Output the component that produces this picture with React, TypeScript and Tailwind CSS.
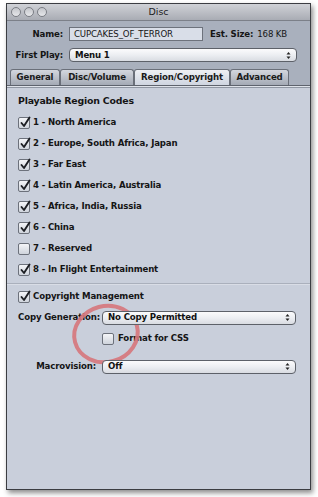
import React from "react"

const regions = [
  { label: "1 - North America", on: true },
  { label: "2 - Europe, South Africa, Japan", on: true },
  { label: "3 - Far East", on: true },
  { label: "4 - Latin America, Australia", on: true },
  { label: "5 - Africa, India, Russia", on: true },
  { label: "6 - China", on: true },
  { label: "7 - Reserved", on: false },
  { label: "8 - In Flight Entertainment", on: true },
]

function Check({ on }: { on: boolean }) {
  return (
    <span className="relative w-[12px] h-[12px] shrink-0 rounded-[2px] border border-[#6c717b] bg-gradient-to-b from-[#f4f5f8] to-[#cfd4dc]">
      {on && (
        <svg className="absolute left-[0px] top-[-2px]" width="13" height="13" viewBox="0 0 13 13">
          <path d="M2.5 7 L5 10 L10.5 1.5" stroke="#1d1f24" strokeWidth="1.9" fill="none" strokeLinecap="round" strokeLinejoin="round" />
        </svg>
      )}
    </span>
  )
}

function Popup({ value, className }: { value: string; className?: string }) {
  return (
    <div
      className={
        "relative z-10 h-[14px] flex items-center justify-between rounded-[4px] border border-[#5d6169] bg-gradient-to-b from-[#fbfbfc] via-[#eceef2] to-[#d9dce2] pl-[5px] pr-[5px] " +
        (className ?? "")
      }
    >
      <span className="font-bold text-[8.6px] tracking-[-0.15px] text-[#111] whitespace-nowrap">{value}</span>
      <svg width="5" height="9" viewBox="0 0 5 9">
        <path d="M0.5 3.5 L2.5 1 L4.5 3.5 Z" fill="#222" />
        <path d="M0.5 5.5 L2.5 8 L4.5 5.5 Z" fill="#222" />
      </svg>
    </div>
  )
}

function Tab({ label, w, active }: { label: string; w: string; active?: boolean }) {
  return (
    <div
      className={
        "h-[16px] flex items-center justify-center rounded-t-[3px] border border-b-0 border-[#6a6f79] text-[8.6px] tracking-[-0.15px] font-bold text-[#1a1a1a] whitespace-nowrap " +
        w +
        (active
          ? " bg-gradient-to-b from-[#eef0f4] to-[#cfd5e0]"
          : " bg-gradient-to-b from-[#d4d7de] to-[#a4aab5]")
      }
    >
      {label}
    </div>
  )
}

const txt = "text-[8.6px] tracking-[-0.15px] whitespace-nowrap"

export default function App() {
  return (
    <div className="w-[318px] h-[497px] bg-white font-['DejaVu_Sans',sans-serif] text-[#151515] overflow-hidden">
      <div className="relative ml-[6px] mt-[3px] w-[305px] h-[487px] border border-[#3b3d42] shadow-[2px_3px_5px_rgba(0,0,0,0.45)] flex flex-col">
        {/* title bar */}
        <div className="relative h-[17px] shrink-0 bg-gradient-to-b from-[#d0d2d7] to-[#a9acb4] border-b border-[#7c8089] flex items-center justify-center">
          <div className="absolute left-[4px] top-[3px] flex gap-[3px]">
            {[0, 1, 2].map((i) => (
              <span key={i} className="w-[10px] h-[10px] rounded-full border border-[#7b7e85] bg-gradient-to-b from-[#c4c6cb] to-[#e6e7ea]" />
            ))}
          </div>
          <span className="text-[9.5px] text-[#222]">Disc</span>
        </div>

        {/* top fields */}
        <div className="bg-[#a9b0bd] pt-[6px] shrink-0">
          <div className="flex items-center h-[14px]">
            <span className={"w-[56px] text-right font-bold " + txt}>Name:</span>
            <div className={"ml-[6px] w-[134px] h-[14px] border border-[#6d727c] bg-[#d9dee8] flex items-center pl-[4px] " + txt}>
              CUPCAKES_OF_TERROR
            </div>
            <span className={"ml-[7px] font-bold " + txt}>Est. Size:</span>
            <span className={"ml-[4px] " + txt}>168 KB</span>
          </div>
          <div className="flex items-center h-[14px] mt-[7px]">
            <span className={"w-[56px] text-right font-bold " + txt}>First Play:</span>
            <Popup value="Menu 1" className="ml-[6px] w-[228px]" />
          </div>
          <div className="flex items-end mt-[7px] pl-[3px]">
            <Tab label="General" w="w-[50px]" />
            <Tab label="Disc/Volume" w="w-[74px]" />
            <Tab label="Region/Copyright" w="w-[96px]" active />
            <Tab label="Advanced" w="w-[59px]" />
          </div>
        </div>

        {/* panel */}
        <div className="relative flex-1 bg-[#c9cfdb]">
          <div className="h-[1px] bg-[#5e636d]" />
          <div className="h-[1px] bg-[#dfe3ea]" />
          <div className="h-[1px] bg-[#9097a3]" />

          <div className="pl-[11px] pt-[2px]">
            <div className="h-[22px] flex items-center font-bold text-[9.4px] tracking-[-0.2px] whitespace-nowrap">Playable Region Codes</div>
            {regions.map((r) => (
              <div key={r.label} className={"h-[21px] flex items-center gap-[3px] font-bold " + txt}>
                <Check on={r.on} />
                <span>{r.label}</span>
              </div>
            ))}
          </div>
          <div className="mt-[3px] h-[1px] bg-[#aab0bc]" />
          <div className="h-[1px] bg-[#d9dde6]" />
          <div className="pl-[11px] pt-[1px]">
            <div className={"h-[21px] flex items-center gap-[3px] font-bold " + txt}>
              <Check on />
              <span>Copyright Management</span>
            </div>
            <div className="h-[21px] flex items-center">
              <span className={"w-[78px] text-right font-bold " + txt}>Copy Generation:</span>
              <Popup value="No Copy Permitted" className="ml-[6px] w-[194px]" />
            </div>
            <div className={"h-[21px] flex items-center gap-[4px] pl-[84px] font-bold " + txt}>
              <Check on={false} />
              <span>Format for CSS</span>
            </div>
            <div className="h-[21px] flex items-center mt-[7px]">
              <span className={"w-[78px] text-right font-bold " + txt}>Macrovision:</span>
              <Popup value="Off" className="ml-[6px] w-[194px]" />
            </div>
          </div>
        </div>

        {/* hand drawn annotation circle */}
        <svg className="absolute left-[60px] top-[292px] pointer-events-none" width="90" height="80" viewBox="0 0 90 80">
          <ellipse cx="39" cy="38" rx="32" ry="28" transform="rotate(-15 39 38)" stroke="#d6767b" strokeOpacity="0.9" strokeWidth="4" fill="none" />
        </svg>
      </div>
    </div>
  )
}
